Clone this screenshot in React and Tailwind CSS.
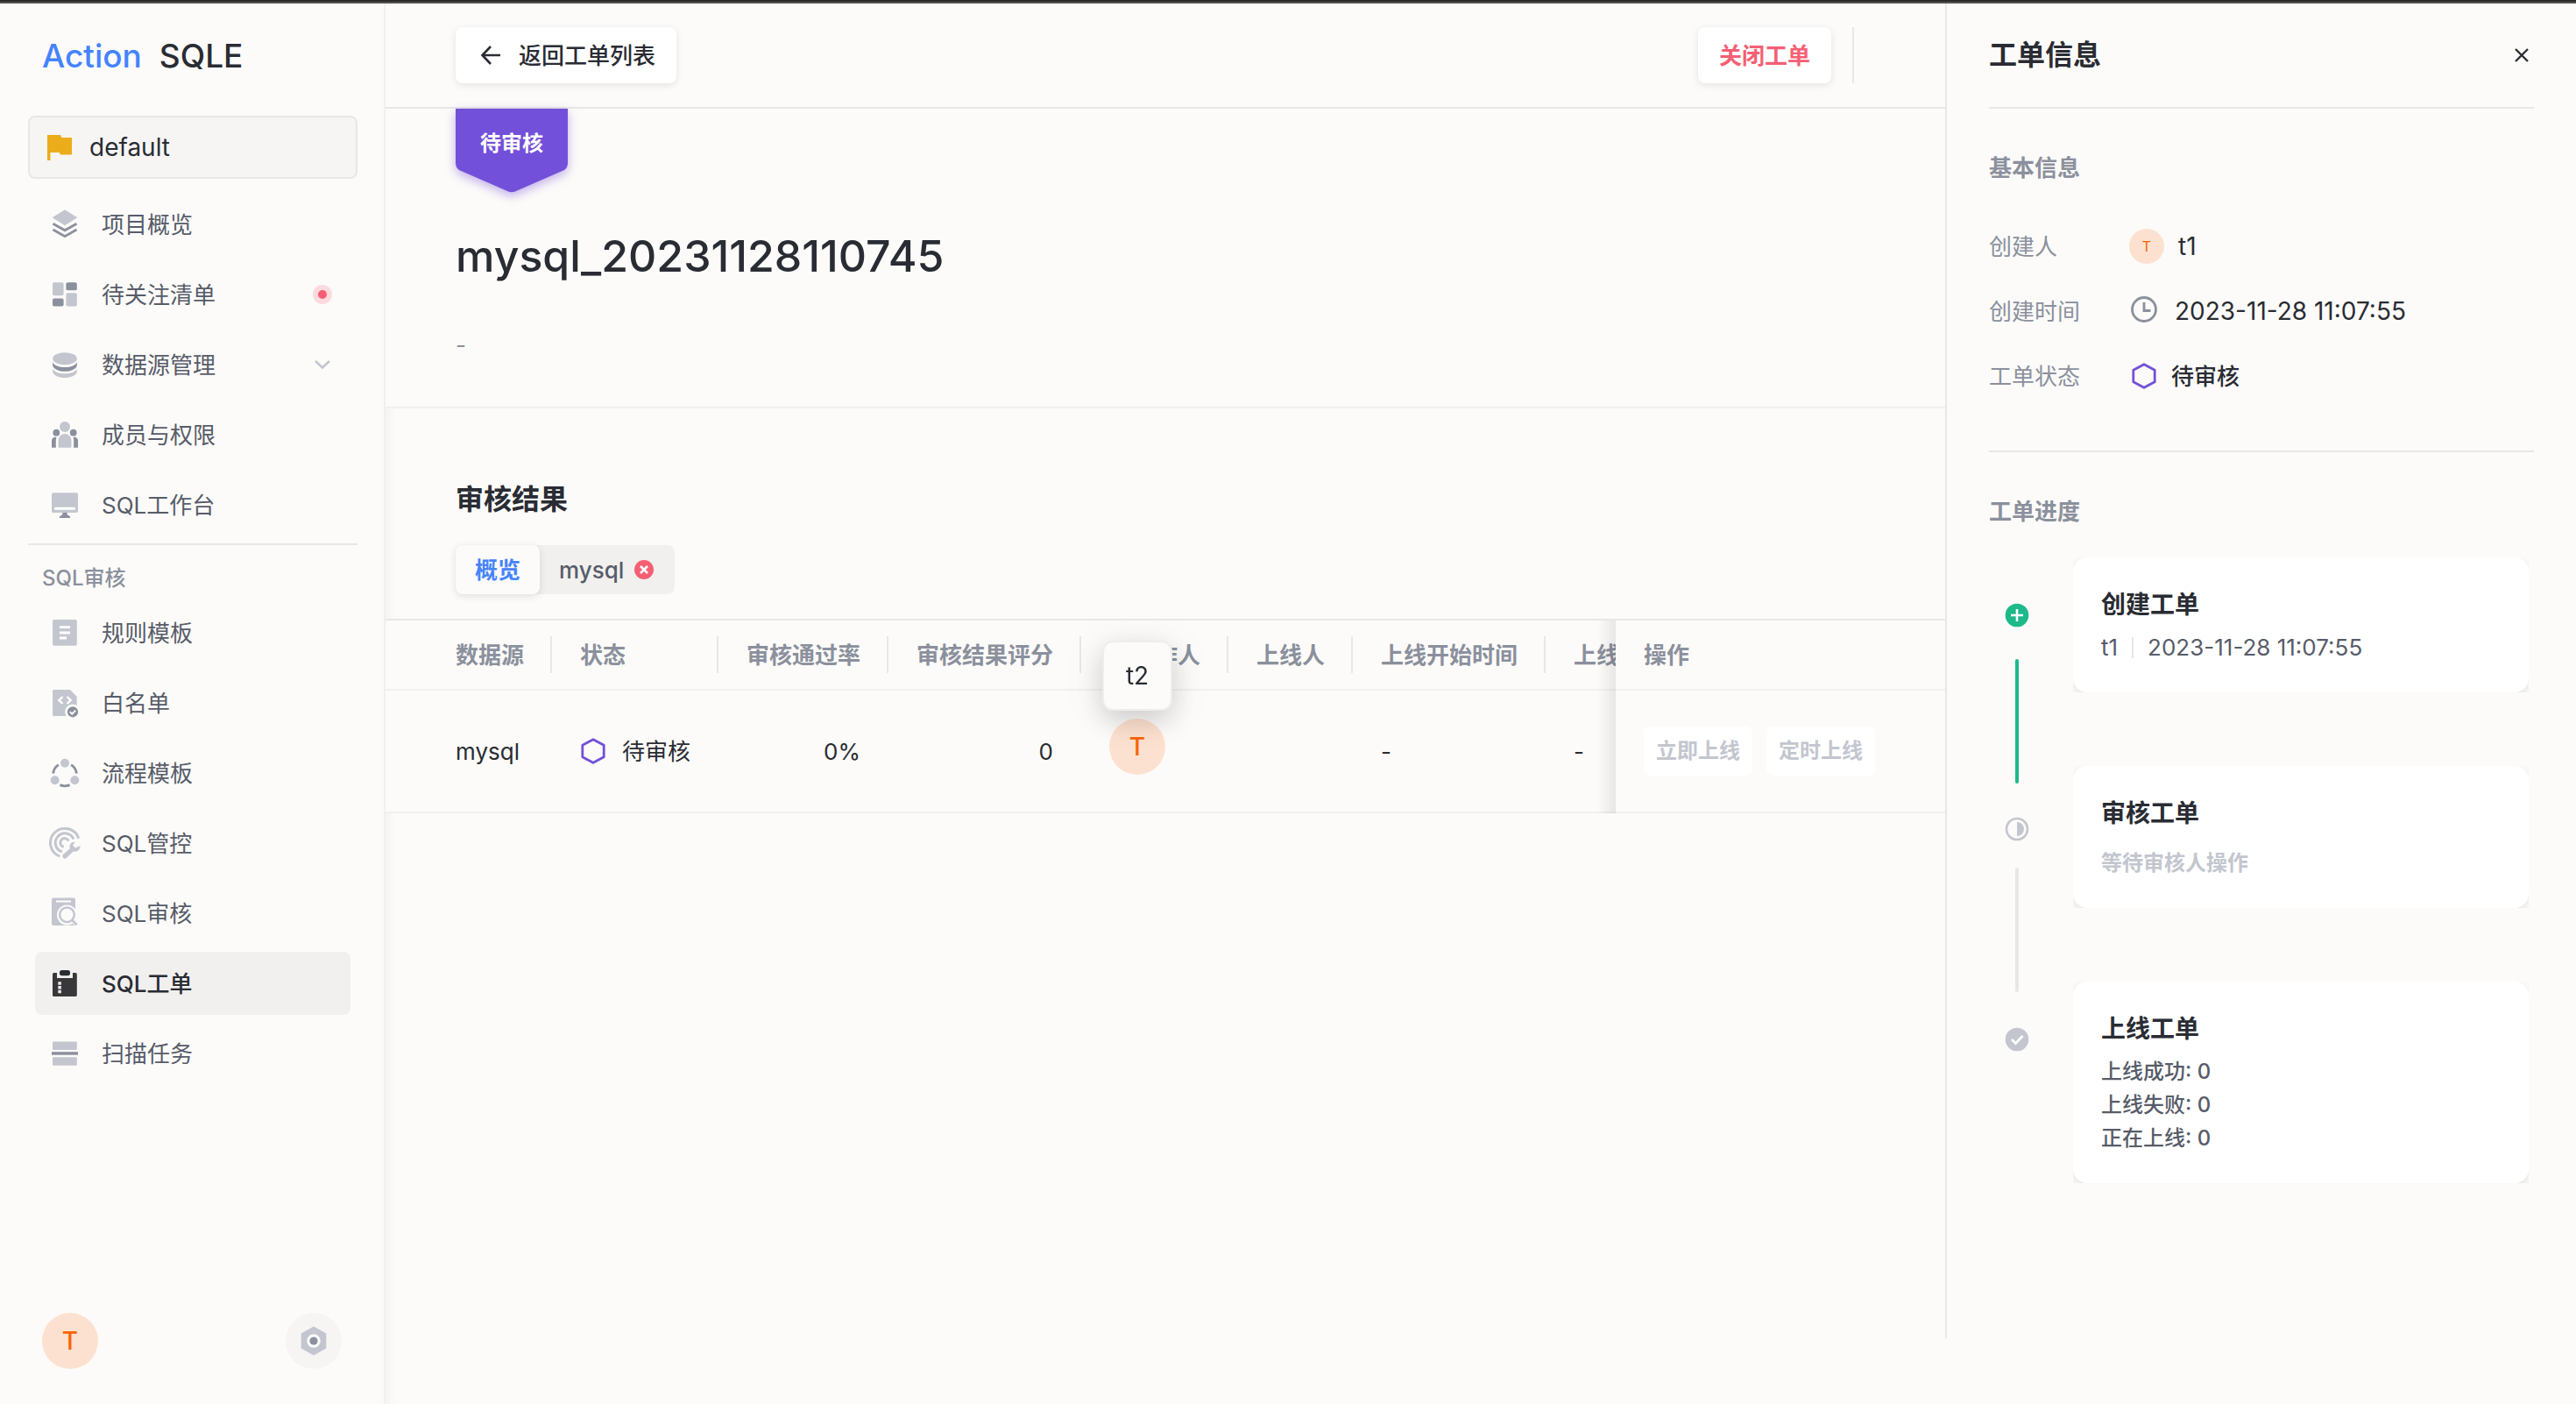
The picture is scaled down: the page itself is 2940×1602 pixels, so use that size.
import React from "react";

const FONT = "font-['Inter','Noto_Sans_CJK_SC',sans-serif]";
const LIGHT = "#c3c6cf";
const DARK = "#8b909d";

function Icon({ children }) {
  return (
    <svg viewBox="0 0 36 36" className="size-9 shrink-0" aria-hidden="true">
      {children}
    </svg>
  );
}

const icons = {
  overview: (
    <Icon>
      <path d="M18 1.3 32.3 10.3 18 19.3 3.7 10.3z" fill={LIGHT} />
      <path d="M4.5 17.2 18 24.8l13.500-7.600M4.500 24 18 31.600 31.500 24" fill="none" stroke={DARK} strokeWidth="2.8" />
    </Icon>
  ),
  watch: (
    <Icon>
      <rect x="4" y="4.300" width="12.600" height="15" rx="1.800" fill={LIGHT} />
      <rect x="19.400" y="4.300" width="12.400" height="9" rx="1.800" fill={DARK} />
      <rect x="4" y="22.600" width="12.600" height="9" rx="1.800" fill={DARK} />
      <rect x="19.400" y="16.300" width="12.400" height="15.300" rx="1.800" fill={LIGHT} />
    </Icon>
  ),
  database: (
    <Icon>
      <ellipse cx="18" cy="11.300" rx="13.800" ry="7" fill={LIGHT} />
      <path d="M4.200 15c1.500 4 7 6 13.800 6s12.300-2 13.800-6v4.200c-1 4-7 6.600-13.800 6.600S5.200 23.200 4.200 19.200z" fill={DARK} />
      <path d="M4.200 22.500c1.500 4 7 5.800 13.800 5.800s12.300-1.800 13.800-5.800v4c-1 4-7 6.500-13.800 6.500S5.200 30.500 4.200 26.500z" fill={LIGHT} />
    </Icon>
  ),
  members: (
    <Icon>
      <circle cx="18" cy="9" r="6" fill={LIGHT} />
      <path d="M10.600 32.700V24.500a7.400 7.400 0 0 1 14.800 0v8.200z" fill={LIGHT} />
      <circle cx="8.300" cy="15.700" r="3.900" fill={DARK} />
      <circle cx="27.700" cy="15.700" r="3.900" fill={DARK} />
      <path d="M3 32.700V25a4 4 0 0 1 5.500-3.900A10 10 0 0 0 7.800 25v7.700zM33 32.700V25a4 4 0 0 0-5.500-3.900 10 10 0 0 1 .7 3.900v7.700z" fill={DARK} />
    </Icon>
  ),
  workbench: (
    <Icon>
      <rect x="3" y="4.300" width="30" height="22.700" rx="1.800" fill={LIGHT} />
      <rect x="6" y="20.800" width="24" height="3" rx="1" fill="#fff" />
      <path d="M15.300 27h5.400v2.200l3.300 2v1.800H12v-1.800l3.300-2z" fill={DARK} />
    </Icon>
  ),
  rule: (
    <Icon>
      <rect x="4" y="3" width="27.800" height="29.700" rx="1.800" fill={LIGHT} />
      <path d="M12 11.700h12M12 18h12M12 24h8" stroke="#fff" strokeWidth="2.800" />
    </Icon>
  ),
  whitelist: (
    <Icon>
      <path d="M5.500 3H24l7.700 7.700V33H5.500A1.500 1.500 0 0 1 4 31.500v-27A1.500 1.500 0 0 1 5.500 3z" fill={LIGHT} />
      <path d="m15.500 11-4.200 4 4.200 4M20.500 11l4.200 4-4.200 4" fill="none" stroke="#fff" strokeWidth="2.400" />
      <circle cx="27" cy="28.300" r="8.800" fill="#fcfbf9" />
      <circle cx="27" cy="28.300" r="6.100" fill={DARK} />
      <path d="m23.800 28.200 2.400 2.400 4-4" fill="none" stroke="#fff" strokeWidth="1.900" />
    </Icon>
  ),
  flow: (
    <Icon>
      <g fill={LIGHT}>
        <circle cx="18" cy="6.700" r="5" />
        <circle cx="6.700" cy="26.300" r="5" />
        <circle cx="29.300" cy="26.300" r="5" />
      </g>
      <path d="M10.800 8.600A14 14 0 0 0 4.600 18.500M25.200 8.600a14 14 0 0 1 6.200 9.900M12.400 31.600a14 14 0 0 0 11.200 0" fill="none" stroke={DARK} strokeWidth="2.800" />
    </Icon>
  ),
  control: (
    <Icon>
      <g fill="none" stroke={LIGHT} strokeWidth="3">
        <path d="M12.300 33.200A16.500 16.500 0 1 1 33.800 12.800" />
        <path d="M14.800 28A10.800 10.800 0 1 1 28 13.500" />
        <path d="M16.800 22.300A4.900 4.900 0 1 1 22.300 15.500" />
      </g>
      <path d="M15.500 31.200 23.500 24.200c-1.300-4.200 2-8.500 6.500-8l-2.600 4.500 2.800 2.600 5.400-2.500c.8 4.500-3.600 8.300-8 7l-8 7.700c-2.400 1.700-5.800-1.500-4.100-4.300z" fill={LIGHT} stroke="#fcfbf9" strokeWidth="0.500" />
    </Icon>
  ),
  audit: (
    <Icon>
      <rect x="3" y="0.500" width="27" height="31.500" rx="1.800" fill={LIGHT} />
      <path d="M8 4.500h17" stroke="#fff" strokeWidth="2" />
      <circle cx="20.500" cy="20" r="11.500" fill="#fcfbf9" />
      <path d="M22 26l10 8v-8z" fill="#fcfbf9" />
      <circle cx="20.500" cy="19.800" r="8.300" fill="none" stroke={LIGHT} strokeWidth="2.400" />
      <path d="m26.200 25.800 5.300 5.400" stroke={LIGHT} strokeWidth="2.800" />
    </Icon>
  ),
  order: (
    <Icon>
      <path d="M5.500 6H9v6h18V6h3.300A1.500 1.500 0 0 1 31.800 7.500v24a1.500 1.500 0 0 1-1.500 1.500H5.500A1.500 1.500 0 0 1 4 31.500v-24A1.500 1.500 0 0 1 5.500 6z" fill="#38383a" />
      <rect x="12" y="3" width="12" height="6.200" rx="2.600" fill="#292c33" />
      <path d="M10.300 16.300h3.600v3.500h-3.600zM10.300 21h3.600v3.500h-3.600zM10.300 25.700h3.600v3.500h-3.600z" fill="#e8e8e8" />
    </Icon>
  ),
  scan: (
    <Icon>
      <rect x="4" y="4.500" width="27.800" height="9.500" rx="1" fill={LIGHT} />
      <rect x="3" y="16.200" width="30" height="3.500" fill={DARK} />
      <rect x="4" y="22.300" width="27.800" height="9.500" rx="1" fill={LIGHT} />
    </Icon>
  ),
};

function NavItem({ icon, label, active, children }) {
  return (
    <a
      href="#"
      aria-current={active ? "page" : undefined}
      className={
        active
          ? "flex h-[72px] items-center gap-6 rounded-lg bg-[#f1f0ef] px-4 text-[26px] font-medium text-[#292c33]"
          : "flex h-[72px] items-center gap-6 rounded-lg px-4 text-[26px] text-[#575c69]"
      }
    >
      {icons[icon]}
      <span className="flex-1">{label}</span>
      {children}
    </a>
  );
}

function Hexagon() {
  return (
    <svg viewBox="-1 0 30 30" className="size-[30px] shrink-0" fill="none" stroke="#7350d9" strokeWidth="2.800" strokeLinejoin="round" aria-hidden="true">
      <path d="M14 1.700 26.200 8.300v13.400L14 28.300 1.800 21.700V8.300z" />
    </svg>
  );
}

function Sidebar() {
  return (
    <aside className="flex w-[440px] shrink-0 flex-col shadow-[inset_-2px_0_0_#f1f0ee]">
      <div className="mt-9 flex h-12 items-center gap-5 px-12 text-[37px] font-medium">
        <span className="text-[#4583ff]">Action</span>
        <span className="text-[#292c33]">SQLE</span>
      </div>
      <button type="button" className="mx-8 mt-11 flex h-[72px] items-center gap-5 rounded-lg border-2 border-[#e8e7e5] bg-[#f6f5f4] px-5 text-[28px] text-[#292c33]">
        <svg viewBox="0 0 28 29" className="h-[29px] w-7" aria-hidden="true">
          <path d="M0 0h15l1.500 3H28v19.500H15L13.500 20H3.500v9H0z" fill="#ebad1c" />
        </svg>
        default
      </button>
      <nav className="mt-4 flex flex-col gap-2 px-10">
        <NavItem icon="overview" label="项目概览" />
        <NavItem icon="watch" label="待关注清单">
          <span className="mr-[5px] flex size-[22px] items-center justify-center rounded-full bg-[#fddade]">
            <span className="size-2.5 rounded-full bg-[#f55f73]" />
          </span>
        </NavItem>
        <NavItem icon="database" label="数据源管理">
          <svg viewBox="0 0 18 10" className="mr-[7px] h-2.5 w-[18px]" fill="none" stroke="#c3c6cf" strokeWidth="2.600" aria-hidden="true">
            <path d="m1 1 8 7.500L17 1" />
          </svg>
        </NavItem>
        <NavItem icon="members" label="成员与权限" />
        <NavItem icon="workbench" label="SQL工作台" />
      </nav>
      <hr className="mx-8 mt-2 border-t-2 border-[#e8e7e5]" />
      <h2 className="mt-5 px-12 text-[24px] leading-9 font-medium text-[#8b909d]">SQL审核</h2>
      <nav className="mt-2 flex flex-col gap-2 px-10">
        <NavItem icon="rule" label="规则模板" />
        <NavItem icon="whitelist" label="白名单" />
        <NavItem icon="flow" label="流程模板" />
        <NavItem icon="control" label="SQL管控" />
        <NavItem icon="audit" label="SQL审核" />
        <NavItem icon="order" label="SQL工单" active />
        <NavItem icon="scan" label="扫描任务" />
      </nav>
      <div className="mt-auto mb-10 flex items-center justify-between pr-[50px] pl-12">
        <button type="button" className="flex size-16 items-center justify-center rounded-full bg-[#fde1d0] text-[28px] font-medium text-[#fa6400]">
          T
        </button>
        <button type="button" aria-label="设置" className="flex size-16 items-center justify-center rounded-full bg-[#f6f5f4]">
          <svg viewBox="0 0 30 34" className="h-[34px] w-[30px]" aria-hidden="true">
            <path d="M15 .5 29.300 8.500v17L15 33.500.7 25.500v-17z" fill={LIGHT} />
            <circle cx="15" cy="17" r="7.700" fill="#fff" />
            <circle cx="15" cy="17" r="4.600" fill={DARK} />
          </svg>
        </button>
      </div>
    </aside>
  );
}

const columns = [
  ["数据源", "w-[190px] pl-20 pr-8 text-left"],
  ["状态", "w-[190px] px-8 text-left"],
  ["审核通过率", "w-[194px] px-8 text-right"],
  ["审核结果评分", "w-[220px] px-8 text-right"],
  ["待操作人", "w-[168px] px-8 text-left"],
  ["上线人", "w-[142px] px-8 text-left"],
  ["上线开始时间", "w-[220px] px-8 text-left"],
  ["上线结束时间", "w-[220px] px-8 text-left"],
];

const STICKY =
  "sticky right-0 w-[376px] bg-[#fcfbf9] pl-8 text-left before:absolute before:top-0 before:right-full before:-bottom-0.5 before:w-5 before:bg-linear-to-l before:from-black/8 before:to-transparent before:content-['']";

function ResultTable() {
  return (
    <div className="overflow-hidden border-t-2 border-[#e8e7e5] bg-[#fcfbf9]">
      <table className="w-[1920px] min-w-full table-fixed border-separate border-spacing-0 whitespace-nowrap text-[26px]">
        <thead>
          <tr className="h-20 text-[#8b909d]">
            {columns.map(([label, cls]) => (
              <th key={label} className={`relative border-b-2 border-[#f1f0ee] p-0 font-semibold ${cls}`}>
                {label}
                <span className="absolute top-[18px] right-0 h-[42px] w-0.5 bg-[#e8e7e5]" />
              </th>
            ))}
            <th className={`border-b-2 border-[#f1f0ee] p-0 font-semibold ${STICKY}`}>操作</th>
          </tr>
        </thead>
        <tbody>
          <tr className="h-[140px] text-[#292c33] [&>td]:border-b-2 [&>td]:border-[#f1f0ee]">
            <td className="pl-20">mysql</td>
            <td className="pl-8">
              <span className="flex items-center gap-[18px]">
                <Hexagon />
                待审核
              </span>
            </td>
            <td className="pr-8 text-right">0%</td>
            <td className="pr-8 text-right">0</td>
            <td className="px-8">
              <div className="relative mb-2.5 flex size-16 items-center justify-center rounded-full bg-[#fde1d0] text-[28px] font-medium text-[#fa6400]">
                T
                <div role="tooltip" className="absolute -top-[89px] -left-2 z-10 flex size-20 items-center justify-center rounded-xl border-2 border-[#eeedeb] bg-[#fcfbf9] text-[28px] font-normal text-[#292c33] shadow-[0_12px_32px_rgba(0,0,0,0.16),0_4px_60px_rgba(0,0,0,0.06)]">
                  t2
                </div>
              </div>
            </td>
            <td className="px-8" />
            <td className="px-8">-</td>
            <td className="px-8">-</td>
            <td className={STICKY}>
              <div className="flex gap-4 text-[24px] font-semibold text-[#c3c6cf]">
                <button type="button" disabled className="h-14 rounded-lg bg-white px-3.5">立即上线</button>
                <button type="button" disabled className="h-14 rounded-lg bg-white px-3.5">定时上线</button>
              </div>
            </td>
          </tr>
        </tbody>
      </table>
    </div>
  );
}

function Main() {
  return (
    <main className="flex min-w-0 flex-1 flex-col">
      <header className="flex h-[120px] items-center justify-between border-b-2 border-[#e8e7e5] pr-[104px] pl-20">
        <button type="button" className="flex h-16 items-center gap-5 rounded-lg bg-white pr-6 pl-7 text-[26px] font-medium text-[#292c33] shadow-[0_2px_8px_rgba(0,0,0,0.1)]">
          <svg viewBox="0 0 24 28" className="h-7 w-6" fill="none" stroke="#292c33" strokeWidth="2.600" aria-hidden="true">
            <path d="M12 4 2.500 14l9.500 10M2 14h21" />
          </svg>
          返回工单列表
        </button>
        <div className="flex items-center gap-6">
          <button type="button" className="h-16 rounded-lg bg-white px-6 text-[26px] font-semibold text-[#f55f73] shadow-[0_2px_8px_rgba(0,0,0,0.1)]">
            关闭工单
          </button>
          <span className="h-16 w-0.5 bg-[#e8e7e5]" />
        </div>
      </header>
      <section className="h-[342px] border-b-2 border-[#f1f0ee] pl-20">
        <div className="relative h-24 w-32">
          <svg viewBox="0 0 128 96" className="absolute inset-0 overflow-visible drop-shadow-[0_4px_6px_rgba(115,80,217,0.45)]" aria-hidden="true">
            <path d="M0 0h128v62q0 5-4 8L69 94q-5 2.500-10 0L4 70q-4-3-4-8z" fill="#7350d9" />
          </svg>
          <span className="relative flex h-20 items-center justify-center text-[24px] font-bold text-white">待审核</span>
        </div>
        <h1 className="mt-9 text-[50px] leading-[72px] font-medium text-[#292c33]">mysql_20231128110745</h1>
        <p className="mt-12 text-[26px] leading-9 text-[#8b909d]">-</p>
      </section>
      <section className="flex-1 bg-[linear-gradient(to_right,#f5f4f2,#fcfbf9_12px)]">
        <div className="px-20 pt-20 pb-7">
          <h2 className="text-[32px] leading-12 font-semibold text-[#292c33]">审核结果</h2>
          <div role="tablist" className="mt-7 flex h-14 w-fit rounded-lg bg-[#f1f0ef] text-[26px]">
            <button type="button" role="tab" aria-selected="true" className="rounded-lg bg-[#fcfbf9] px-[22px] font-semibold text-[#4583ff] shadow-[0_2px_8px_rgba(0,0,0,0.12)]">
              概览
            </button>
            <button type="button" role="tab" aria-selected="false" className="flex items-center gap-3 pr-6 pl-[22px] font-medium text-[#575c69]">
              mysql
              <svg viewBox="0 0 22 22" className="size-[22px]" aria-hidden="true">
                <circle cx="11" cy="11" r="11" fill="#f55f73" />
                <path d="m7 7 8 8M15 7l-8 8" stroke="#fff" strokeWidth="2.600" />
              </svg>
            </button>
          </div>
        </div>
        <ResultTable />
      </section>
    </main>
  );
}

function InfoRow({ label, children }) {
  return (
    <div className="flex h-[74px] items-center">
      <dt className="w-40 text-[#8b909d]">{label}</dt>
      <dd className="flex items-center gap-4 text-[#292c33]">{children}</dd>
    </div>
  );
}

function StepCard({ title, className, children }) {
  return (
    <li className="overflow-hidden">
      <div className={`rounded-2xl bg-white px-8 pt-[34px] shadow-[0_4px_12px_rgba(0,0,0,0.1)] ${className}`}>
        <h4 className="text-[28px] leading-10 font-semibold text-[#292c33]">{title}</h4>
        {children}
      </div>
    </li>
  );
}

function InfoPanel() {
  return (
    <aside className="mb-[75px] w-[720px] shrink-0 border-l-2 border-[#e8e7e5] pr-12 pl-12">
      <header className="flex h-[120px] items-center justify-between border-b-2 border-[#e8e7e5] pr-1.5">
        <h2 className="text-[32px] font-semibold text-[#292c33]">工单信息</h2>
        <button type="button" aria-label="关闭">
          <svg viewBox="0 0 16 16" className="size-4" stroke="#292c33" strokeWidth="2.400" aria-hidden="true">
            <path d="m1 1 14 14M15 1 1 15" />
          </svg>
        </button>
      </header>
      <section className="border-b-2 border-[#e8e7e5] pt-12 pb-12 text-[26px]">
        <h3 className="leading-10 font-semibold text-[#8b909d]">基本信息</h3>
        <dl className="mt-8">
          <InfoRow label="创建人">
            <span className="flex size-10 items-center justify-center rounded-full bg-[#fde1d0] text-[16px] text-[#fa6400]">T</span>
            <span className="text-[28px]">t1</span>
          </InfoRow>
          <InfoRow label="创建时间">
            <svg viewBox="0 0 30 30" className="mr-1 mb-1 ml-0.5 size-[30px]" fill="none" stroke={DARK} strokeWidth="2.800" aria-hidden="true">
              <circle cx="15" cy="15" r="13.500" />
              <path d="M15 7v9.500h7.500" />
            </svg>
            <span className="text-[28px]">2023-11-28 11:07:55</span>
          </InfoRow>
          <InfoRow label="工单状态">
            <span className="pl-0.5"><Hexagon /></span>
            <span className="font-medium">待审核</span>
          </InfoRow>
        </dl>
      </section>
      <section className="pt-12">
        <h3 className="text-[26px] leading-10 font-semibold text-[#8b909d]">工单进度</h3>
        <div className="mt-8 flex gap-8">
          <div className="flex w-16 flex-col items-center pt-[52px]" aria-hidden="true">
            <svg viewBox="0 0 28 28" className="size-7">
              <circle cx="14" cy="14" r="13.300" fill="#1eb98a" />
              <path d="M14 7v14M7 14h14" stroke="#fff" strokeWidth="2.600" />
            </svg>
            <span className="mt-9 h-[142px] w-1 rounded-full bg-[#1eb98a]" />
            <svg viewBox="0 0 28 28" className="mt-[38px] size-7">
              <circle cx="14" cy="14" r="12" fill="none" stroke={LIGHT} strokeWidth="2.600" />
              <path d="M14 6a8 8 0 0 1 0 16z" fill={LIGHT} />
            </svg>
            <span className="mt-[30px] h-[142px] w-1 rounded-full bg-[#e8e7e5]" />
            <svg viewBox="0 0 28 28" className="mt-10 size-7">
              <circle cx="14" cy="14" r="13.300" fill={LIGHT} />
              <path d="m8 14 4.500 4.500 8-8.500" fill="none" stroke="#fff" strokeWidth="2.800" />
            </svg>
          </div>
          <ol className="flex flex-1 flex-col gap-[84px] pr-1.5 text-[24px] text-[#575c69]">
            <StepCard title="创建工单" className="h-[154px]">
              <p className="mt-2.5 flex items-center gap-4 text-[26px] leading-[38px]">
                t1
                <span className="h-6 w-0.5 bg-[#e8e7e5]" />
                2023-11-28 11:07:55
              </p>
            </StepCard>
            <StepCard title="审核工单" className="h-[162px]">
              <p className="mt-[18px] leading-[38px] font-semibold text-[#c3c6cf]">等待审核人操作</p>
            </StepCard>
            <StepCard title="上线工单" className="h-[230px]">
              <div className="mt-2.5 leading-[38px] font-medium">
                <p>上线成功: 0</p>
                <p>上线失败: 0</p>
                <p>正在上线: 0</p>
              </div>
            </StepCard>
          </ol>
        </div>
      </section>
    </aside>
  );
}

export default function App() {
  return (
    <div className={`flex min-h-screen flex-col bg-[#fcfbf9] ${FONT}`} lang="zh-CN">
      <div className="h-1 border-b-2 border-[#555352] bg-[#2b2929]" />
      <div className="flex flex-1">
        <Sidebar />
        <Main />
        <InfoPanel />
      </div>
    </div>
  );
}
